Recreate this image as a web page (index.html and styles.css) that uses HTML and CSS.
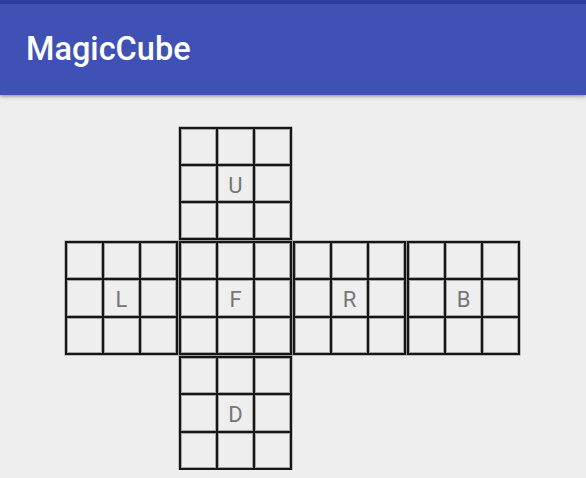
FILE: index.html
```html
<!DOCTYPE html>
<html>
<head>
<meta charset="utf-8">
<link rel="stylesheet" href="styles.css">
</head>
<body>
<div class="statusbar"></div>
<header class="appbar"><span class="title">MagicCube</span></header>
<main class="content">
  <div class="net">
    <div class="face u">
      <div class="cell"></div><div class="cell"></div><div class="cell"></div>
      <div class="cell"></div><div class="cell">U</div><div class="cell"></div>
      <div class="cell"></div><div class="cell"></div><div class="cell"></div>
    </div>
    <div class="face l">
      <div class="cell"></div><div class="cell"></div><div class="cell"></div>
      <div class="cell"></div><div class="cell">L</div><div class="cell"></div>
      <div class="cell"></div><div class="cell"></div><div class="cell"></div>
    </div>
    <div class="face f">
      <div class="cell"></div><div class="cell"></div><div class="cell"></div>
      <div class="cell"></div><div class="cell">F</div><div class="cell"></div>
      <div class="cell"></div><div class="cell"></div><div class="cell"></div>
    </div>
    <div class="face r">
      <div class="cell"></div><div class="cell"></div><div class="cell"></div>
      <div class="cell"></div><div class="cell">R</div><div class="cell"></div>
      <div class="cell"></div><div class="cell"></div><div class="cell"></div>
    </div>
    <div class="face b">
      <div class="cell"></div><div class="cell"></div><div class="cell"></div>
      <div class="cell"></div><div class="cell">B</div><div class="cell"></div>
      <div class="cell"></div><div class="cell"></div><div class="cell"></div>
    </div>
    <div class="face d">
      <div class="cell"></div><div class="cell"></div><div class="cell"></div>
      <div class="cell"></div><div class="cell">D</div><div class="cell"></div>
      <div class="cell"></div><div class="cell"></div><div class="cell"></div>
    </div>
  </div>
</main>
</body>
</html>
```
FILE: styles.css
```css
html, body {
  margin: 0;
  padding: 0;
  background: #eeeeee;
  font-family: Roboto, "Noto Sans", sans-serif;
  overflow: hidden;
}
.statusbar {
  height: 4px;
  background: #303f9f;
}
.appbar {
  height: 91px;
  background: #3f51b5;
  display: flex;
  align-items: center;
  padding-left: 26px;
  box-shadow: 0 2px 4px rgba(0,0,0,0.25), 0 1px 2px rgba(0,0,0,0.15);
  position: relative;
  z-index: 1;
}
.title {
  color: #ffffff;
  font-size: 32.5px;
  font-weight: 500;
  margin-top: -1px;
}
.content {
  padding: 32px 0 0 65px;
}
.net {
  display: grid;
  grid-template-columns: repeat(4, 113px);
  grid-template-rows: 113px 114px 114px;
  gap: 1px;
}
.face {
  display: grid;
  grid-template-columns: repeat(3, 1fr);
  grid-template-rows: repeat(3, 1fr);
  gap: 2px;
  padding: 2px;
  background: #161616;
  box-shadow: 0 0 0 0.5px rgba(0,0,0,0.4);
}
.cell {
  background: #eeeeee;
  display: flex;
  align-items: center;
  justify-content: center;
  color: #767676;
  font-size: 22px;
  padding-top: 3px;
  box-shadow: inset 0 0 0 1px rgba(0,0,0,0.3);
}
.u { grid-column: 2; grid-row: 1; }
.l { grid-column: 1; grid-row: 2; }
.f { grid-column: 2; grid-row: 2; }
.r { grid-column: 3; grid-row: 2; }
.b { grid-column: 4; grid-row: 2; }
.d { grid-column: 2; grid-row: 3; }
```
